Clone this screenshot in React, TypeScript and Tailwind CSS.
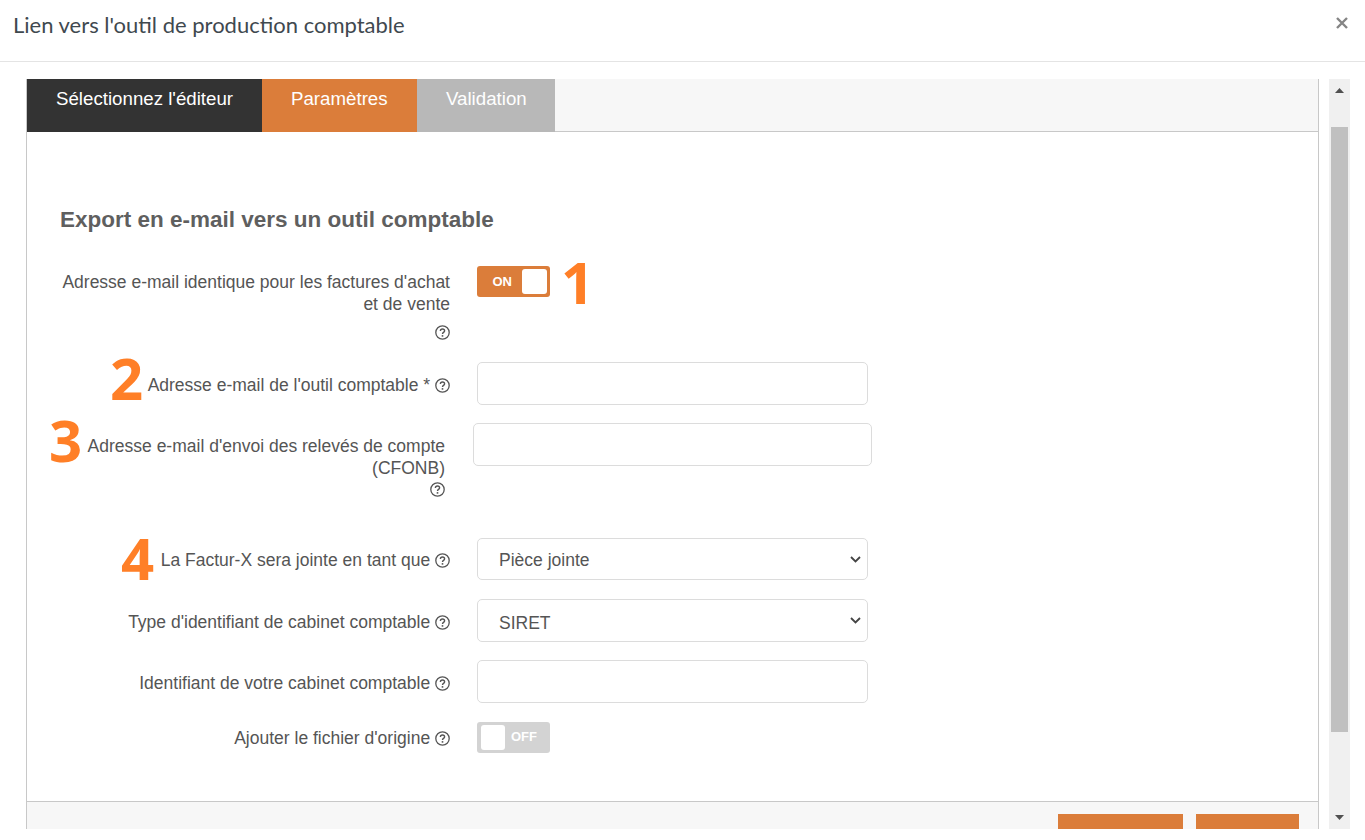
import React from 'react';

const HelpIcon = () => (
  <svg width="15" height="15" viewBox="0 0 15 15" fill="none" className="inline-block shrink-0 align-[-2px]">
    <circle cx="7.5" cy="7.5" r="6.7" stroke="#555" strokeWidth="1.3" />
    <path d="M5.4 5.9c0-1.2.9-1.9 2.1-1.9s2.1.7 2.1 1.8c0 1.6-2.1 1.6-2.1 3.1" stroke="#555" strokeWidth="1.4" />
    <rect x="6.7" y="10.1" width="1.6" height="1.6" fill="#555" />
  </svg>
);

const Marker = ({ children, className }: { children: React.ReactNode; className: string }) => (
  <span className={`absolute font-['Open_Sans',sans-serif] font-bold text-[#ff7f27] leading-none ${className}`}>{children}</span>
);

const Toggle = ({ on }: { on: boolean }) => (
  <div className={`w-[73px] h-[31px] rounded-[3px] flex items-center px-[3px] ${on ? 'bg-[#db7d3a] justify-end' : 'bg-[#d3d3d3]'}`}>
    {on ? (
      <>
        <span className="text-[13px] font-bold text-white mr-[10px]">ON</span>
        <span className="w-[25px] h-[25px] rounded-[3px] bg-white"></span>
      </>
    ) : (
      <>
        <span className="w-[24px] h-[25px] rounded-[3px] bg-white ml-[1px]"></span>
        <span className="text-[13px] font-bold text-white ml-[6px] -mt-[2px]">OFF</span>
      </>
    )}
  </div>
);

const TextInput = ({ className = 'w-[391px]' }: { className?: string }) => (
  <input type="text" className={`h-[43px] rounded-[5px] border border-[#dcdcdc] bg-white ${className}`} />
);

const SelectInput = ({ value, className = 'h-[43px] pt-[5px]' }: { value: string; className?: string }) => (
  <div className="relative w-[391px]">
    <select
      defaultValue={value}
      className={`block w-full appearance-none rounded-[5px] border border-[#dcdcdc] bg-white pl-[21px] text-[#555] ${className}`}
    >
      <option>{value}</option>
    </select>
    <svg width="11" height="7" viewBox="0 0 11 7" fill="none" className="absolute right-[7px] top-[18px] pointer-events-none">
      <path d="M1 1l4.5 4.5L10 1" stroke="#444" strokeWidth="1.8" />
    </svg>
  </div>
);

const App: React.FC = () => {
  return (
    <div className="h-[829px] bg-white overflow-hidden font-['Liberation_Sans',Arial,sans-serif] text-[17.5px] text-[#555]">
      {/* Header */}
      <div className="h-[62px] border-b border-[#e4e4e4] pl-[13px] pr-[17px] flex justify-between items-start">
        <h4 className="mt-[11px] font-['Lato',sans-serif] text-[22px] leading-[28px] text-[#3f494f]">
          Lien vers l'outil de production comptable
        </h4>
        <svg width="12" height="12" viewBox="0 0 12 12" className="mt-[17px]">
          <path d="M1 1l10 10M11 1L1 11" stroke="#858585" strokeWidth="2.4" />
        </svg>
      </div>

      <div className="flex h-[750px] mt-[17px] pl-[26px]">
        {/* Wizard */}
        <div className="w-[1293px] h-full border-x border-[#c8c8c8] flex flex-col">
          <div className="flex h-[53px] shrink-0 bg-[#f7f7f7] border-b border-[#c8c8c8] text-white text-[18.7px]">
            <div className="w-[235px] h-[53px] bg-[#333333] pl-[29px] pt-[6px]">Sélectionnez l'éditeur</div>
            <div className="w-[155px] h-[53px] bg-[#db7d3a] pl-[29px] pt-[6px]">Paramètres</div>
            <div className="w-[138px] h-[53px] bg-[#b8b8b8] pl-[29px] pt-[6px]">Validation</div>
          </div>

          <div className="relative flex-1 pl-[33px]">
            <h3 className="mt-[76px] text-[22.5px] leading-[24px] font-bold text-[#5f5f5f]">Export en e-mail vers un outil comptable</h3>

            <div className="relative mt-[34px] flex">
              <Marker className="left-[501px] -top-[13px] text-[58px]">1</Marker>
              <div className="w-[390px] pt-[5px] text-right leading-[22px]">
                <div>Adresse e-mail identique pour les factures d'achat<br />et de vente</div>
                <div className="mt-[6px] h-[22px]"><HelpIcon /></div>
              </div>
              <div className="ml-[27px]"><Toggle on /></div>
            </div>

            <div className="relative mt-[19px] flex">
              <Marker className="left-[50px] -top-[13px] text-[58px]">2</Marker>
              <div className="w-[390px] pt-[12px] text-right leading-[22px]">Adresse e-mail de l'outil comptable * <HelpIcon /></div>
              <div className="ml-[27px]"><TextInput /></div>
            </div>

            <div className="relative mt-[18px] flex">
              <Marker className="-left-[11px] -top-[12px] text-[58px]">3</Marker>
              <div className="w-[385px] pt-[12px] text-right leading-[22px]">
                <div>Adresse e-mail d'envoi des relevés de compte<br />(CFONB)</div>
                <div className="h-[22px] -mt-[1px]"><HelpIcon /></div>
              </div>
              <div className="ml-[28px]"><TextInput className="w-[399px]" /></div>
            </div>

            <div className="relative mt-[38px] flex">
              <Marker className="left-[61px] -top-[9px] text-[58px]">4</Marker>
              <div className="w-[390px] pt-[11px] text-right leading-[22px]">La Factur-X sera jointe en tant que <HelpIcon /></div>
              <div className="ml-[27px]"><SelectInput value="Pièce jointe" className="h-[42px] pt-[3px]" /></div>
            </div>

            <div className="mt-[19px] flex">
              <div className="w-[390px] pt-[12px] text-right leading-[22px]">Type d'identifiant de cabinet comptable <HelpIcon /></div>
              <div className="ml-[27px]"><SelectInput value="SIRET" /></div>
            </div>

            <div className="mt-[18px] flex">
              <div className="w-[390px] pt-[12px] text-right leading-[22px]">Identifiant de votre cabinet comptable <HelpIcon /></div>
              <div className="ml-[27px]"><TextInput /></div>
            </div>

            <div className="mt-[19px] flex">
              <div className="w-[390px] pt-[5px] text-right leading-[22px]">Ajouter le fichier d'origine <HelpIcon /></div>
              <div className="ml-[27px]"><Toggle on={false} /></div>
            </div>
          </div>

          {/* Footer */}
          <div className="h-[28px] shrink-0 overflow-hidden bg-[#f7f7f7] border-t border-[#c8c8c8] flex justify-end gap-[13px] pr-[19px] pt-[12px]">
            <div className="w-[125px] h-[40px] bg-[#db7d3a]"></div>
            <div className="w-[103px] h-[40px] bg-[#db7d3a]"></div>
          </div>
        </div>

        {/* Scrollbar */}
        <div className="ml-[10px] w-[21px] h-full bg-[#f0f0f0] flex flex-col items-center">
          <div className="h-[48px] w-full flex justify-center pt-[9px]">
            <svg width="9" height="5" viewBox="0 0 9 5"><path d="M4.5 0L9 5H0z" fill="#505050" /></svg>
          </div>
          <div className="w-[17px] h-[605px] bg-[#c0c0c0]"></div>
          <div className="flex-1 w-full flex justify-center items-end pb-[9px]">
            <svg width="9" height="5" viewBox="0 0 9 5"><path d="M0 0h9L4.5 5z" fill="#505050" /></svg>
          </div>
        </div>
      </div>
    </div>
  );
};

export default App;
